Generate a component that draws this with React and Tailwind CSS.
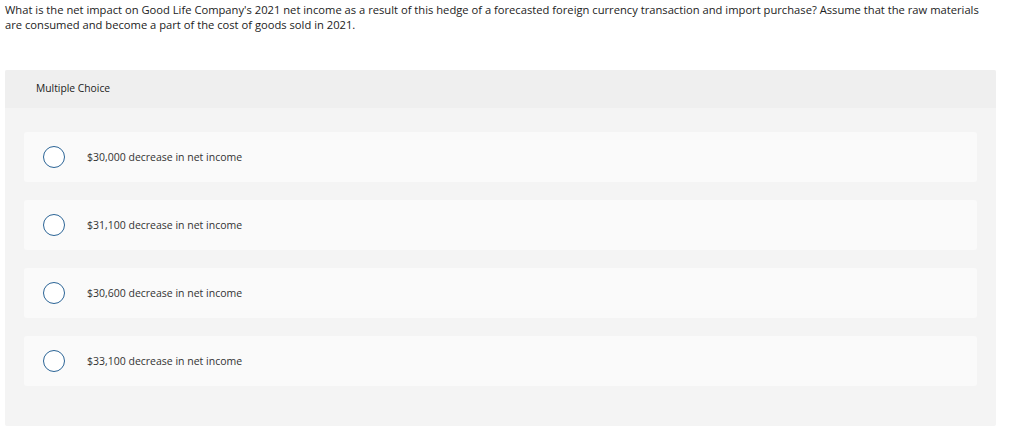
const options = [
  '$30,000 decrease in net income',
  '$31,100 decrease in net income',
  '$30,600 decrease in net income',
  '$33,100 decrease in net income',
];

export default function App() {
  return (
    <div className="bg-white w-[1017px] h-[438px] text-[#333] font-['Open_Sans',sans-serif]">
      <p className="ml-[5px] w-[982px] pt-[2px] text-[11.2px] leading-[15px] text-[#222]">
        What is the net impact on Good Life Company's 2021 net income as a result of this hedge of a forecasted foreign currency transaction and import purchase? Assume that the raw materials are consumed and become a part of the cost of goods sold in 2021.
      </p>

      <div className="mt-[38px] ml-[5px] w-[991px] bg-[#f4f4f4] rounded-[2px]">
        <div className="h-[38px] bg-[#efefef] flex items-center pl-[31px] text-[10.3px] text-[#222] rounded-t-[2px]">
          Multiple Choice
        </div>
        <div className="pt-[24px] pb-[40px] px-[19px] flex flex-col gap-[18px]">
          {options.map((opt) => (
            <div key={opt} className="h-[50px] bg-[#fafafa] rounded-[3px] flex items-center">
              <span className="ml-[19px] w-[22px] h-[22px] rounded-full border-[1.5px] border-[#2b6496] bg-white shrink-0" />
              <span className="ml-[22px] pt-[1px] text-[10.5px] text-[#333]">{opt}</span>
            </div>
          ))}
        </div>
      </div>
    </div>
  );
}
